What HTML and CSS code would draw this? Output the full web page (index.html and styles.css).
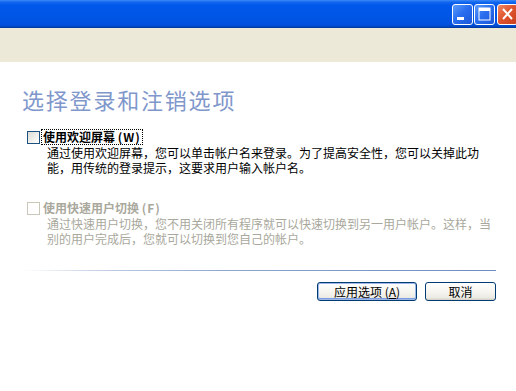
FILE: index.html
```html
<!DOCTYPE html>
<html lang="zh-CN">
<head>
<meta charset="utf-8">
<title>选择登录和注销选项</title>
<link rel="stylesheet" href="styles.css">
</head>
<body>
<div class="window">
  <div class="titlebar">
    <span class="tbtn tmin"><svg width="21" height="21" viewBox="0 0 21 21"><rect x="5" y="13" width="7" height="3" fill="#fff"/></svg></span>
    <span class="tbtn tmax"><svg width="21" height="21" viewBox="0 0 21 21"><rect x="5" y="4" width="11" height="12" fill="none" stroke="#fff" stroke-width="1"/><rect x="5" y="4" width="11" height="3" fill="#fff"/></svg></span>
    <span class="tbtn tclose"><svg width="21" height="21" viewBox="0 0 21 21"><path d="M6 5 L15 15 M15 5 L6 15" stroke="#fff" stroke-width="2"/></svg></span>
  </div>
  <div class="band"></div>
  <div class="content">
    <h1 class="title">选择登录和注销选项</h1>
    <div class="option">
      <div class="opt-row"><span class="check"></span><span class="label focus">使用欢迎屏幕 (<u>W</u>)</span></div>
      <p class="desc">通过使用欢迎屏幕，您可以单击帐户名来登录。为了提高安全性，您可以关掉此功<br>能，用传统的登录提示，这要求用户输入帐户名。</p>
    </div>
    <div class="option option2 disabled">
      <div class="opt-row"><span class="check"></span><span class="label">使用快速用户切换 (<u>F</u>)</span></div>
      <p class="desc">通过快速用户切换，您不用关闭所有程序就可以快速切换到另一用户帐户。这样，当<br>别的用户完成后，您就可以切换到您自己的帐户。</p>
    </div>
    <div class="sep"></div>
    <div class="buttons">
      <span class="btn btn-default">应用选项 (<u>A</u>)</span>
      <span class="btn btn-cancel">取消</span>
    </div>
  </div>
</div>
</body>
</html>
```
FILE: styles.css
```css
html, body {
  margin: 0;
  padding: 0;
  background: #fff;
}
body {
  width: 516px;
  height: 391px;
  overflow: hidden;
  font-family: "Noto Sans CJK SC", "Noto Sans", sans-serif;
  font-size: 12px;
  color: #000;
}
.window {
  width: 516px;
  height: 391px;
  overflow: hidden;
}
.titlebar {
  height: 28px;
  box-sizing: border-box;
  display: flex;
  justify-content: flex-end;
  align-items: flex-start;
  padding-top: 4px;
  background: linear-gradient(to bottom, #3d8bf8 0px, #1468f0 2px, #0058ea 5px, #0055e5 18px, #0050dd 25px, #0043b8 27px, #003296 28px);
}
.tbtn {
  width: 21px;
  height: 21px;
  box-sizing: border-box;
  border: 1px solid #fff;
  border-radius: 3px;
  display: block;
  overflow: hidden;
  position: relative;
}
.tbtn svg {
  position: absolute;
  left: -1px;
  top: -1px;
}
.tmin, .tmax {
  background: linear-gradient(135deg, #5d9cfa 0%, #2a6ff0 45%, #1a57d8 100%);
}
.tmin { margin-right: 1px; }
.tmax { margin-right: 2px; }
.tclose {
  margin-right: -2px;
  background: linear-gradient(135deg, #f08a65 0%, #e0552f 45%, #c9401d 100%);
}
.band {
  height: 34px;
  background: #ece9d8;
}
.content {
  padding: 0 20px 0 22px;
}
.title {
  margin: 24px 0 0 0;
  font-size: 22px;
  line-height: 26px;
  letter-spacing: 1.8px;
  font-weight: normal;
  color: #7f97cb;
}
.option {
  margin-top: 17px;
}
.option2 {
  margin-top: 25px;
}
.opt-row {
  display: flex;
  align-items: center;
  height: 16px;
}
.check {
  width: 13px;
  height: 13px;
  box-sizing: border-box;
  margin-left: 5px;
  margin-right: 2px;
  border: 1px solid #1c5180;
  background: linear-gradient(135deg, #dcdcd6 0%, #f2f2ee 60%, #ffffff 100%);
}
.label {
  font-weight: bold;
  line-height: 14px;
  padding: 0 2px 0 1px;
}
.label u { text-decoration: none; padding: 0 1px; }
.focus {
  outline: 1px dotted #000;
}
.desc {
  margin: 0;
  padding-left: 25px;
  line-height: 15px;
  white-space: nowrap;
}
.option2 .desc { margin-top: 0; }
.disabled { color: #a9a89c; }
.disabled .check {
  border-color: #c9c7ba;
  background: #fff;
}
.sep {
  margin-top: 24px;
  height: 1px;
  background: linear-gradient(to right, rgba(143,166,207,0) 0px, rgba(143,166,207,0.6) 90px, #8ea6cf 200px, #6f8cc0 474px);
}
.buttons {
  margin-top: 11px;
  display: flex;
  justify-content: flex-end;
  gap: 8px;
}
.btn {
  height: 19px;
  box-sizing: border-box;
  border: 1px solid #003c74;
  border-radius: 3px;
  background: linear-gradient(to bottom, #ffffff 0%, #f6f5f0 50%, #ecebe4 85%, #d6d0c5 100%);
  display: flex;
  align-items: center;
  justify-content: center;
  line-height: 14px;
}
.btn u {
  text-decoration: underline;
  text-underline-offset: 1px;
}
.btn-default {
  width: 100px;
  box-shadow: inset 0 0 0 1px #9db7e8, inset 0 -1px 0 1px #7d9ce0;
}
.btn-cancel {
  width: 71px;
}
```
